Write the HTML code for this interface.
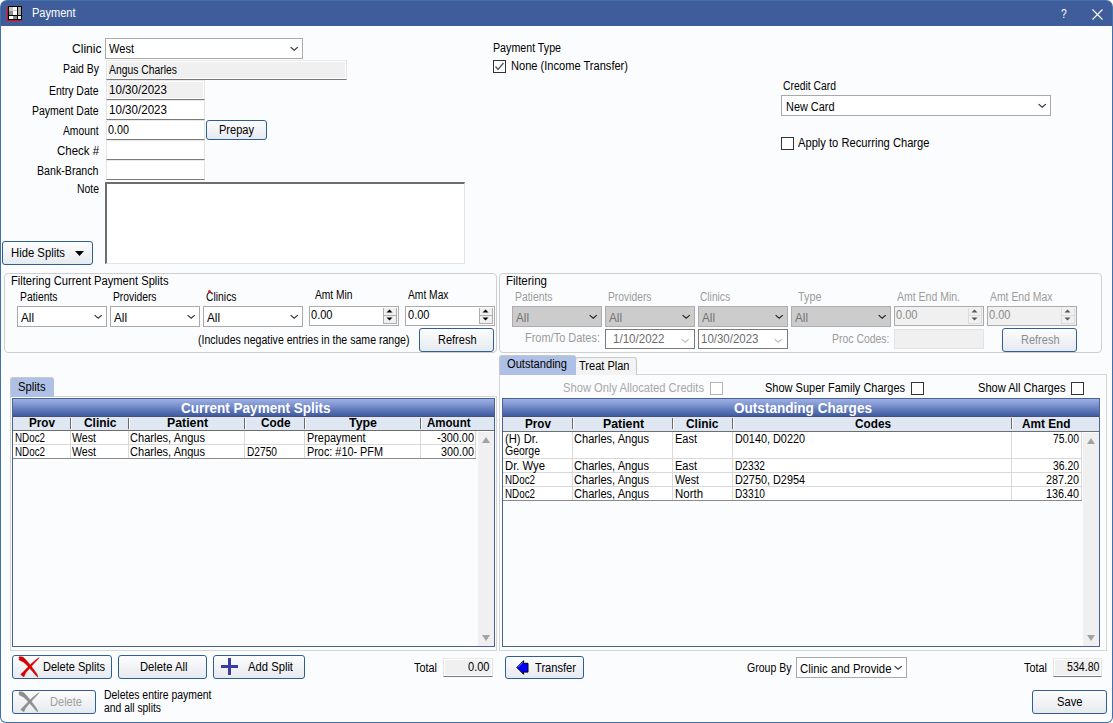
<!DOCTYPE html>
<html><head><meta charset="utf-8"><style>
html,body{margin:0;padding:0;background:#FFFFFF;}
body{width:1113px;height:723px;overflow:hidden;position:relative;font-family:"Liberation Sans",sans-serif;}
.b{position:absolute;}
.t{position:absolute;white-space:nowrap;}
</style></head><body>
<div class="b" style="left:0;top:0;width:1113px;height:723px;background:#4270AA;border-radius:7px 7px 6px 6px;"></div>
<div class="b" style="left:1px;top:1px;width:1111px;height:25px;background:#405D9B;border-radius:6px 6px 0 0;"></div>
<div class="b" style="left:1px;top:26px;width:1111px;height:696px;background:#FBFCFE;border-radius:0 0 5px 5px;"></div>
<svg class="b" style="left:7px;top:6px" width="15" height="15" viewBox="0 0 15 15" shape-rendering="crispEdges">
<rect x="0" y="1" width="1" height="14" fill="#FF0000"/><rect x="0" y="14" width="14" height="1" fill="#FF0000"/>
<rect x="1" y="0" width="14" height="14" fill="#000"/>
<rect x="2" y="1" width="4" height="4" fill="#C4C4C4"/><rect x="2" y="5" width="4" height="4" fill="#8E8E8E"/>
<rect x="6" y="1" width="4" height="8" fill="#FFFFFF"/><rect x="6" y="4" width="4" height="1" fill="#C8C8C8"/>
<rect x="11" y="1" width="3" height="8" fill="#ABABAB"/>
<rect x="2" y="10" width="4" height="3" fill="#FFFFFF"/><rect x="6" y="10" width="4" height="3" fill="#8A8A8A"/><rect x="11" y="10" width="3" height="3" fill="#FFFFFF"/>
</svg>
<div class="t" style="left:32.30px;top:6.34px;font-size:12px;line-height:14px;color:#FFFFFF;transform:scaleX(0.9186);transform-origin:0 0;">Payment</div>
<div class="t" style="left:1061.13px;top:7.34px;font-size:12px;line-height:14px;color:#FFFFFF;transform:scaleX(0.8600);transform-origin:0 0;">?</div>
<svg class="b" style="left:1092px;top:9px" width="11" height="11" viewBox="0 0 11 11"><path d="M0.5 0.5 L10.5 10.5 M10.5 0.5 L0.5 10.5" stroke="#fff" stroke-width="1.1"/></svg>
<div class="t" style="left:71.50px;top:42.17px;font-size:12.5px;line-height:14px;color:#000;transform:scaleX(0.9653);transform-origin:0 0;">Clinic</div>
<div class="t" style="left:62.60px;top:62.17px;font-size:12.5px;line-height:14px;color:#000;transform:scaleX(0.8357);transform-origin:0 0;">Paid By</div>
<div class="t" style="left:49.00px;top:84.17px;font-size:12.5px;line-height:14px;color:#000;transform:scaleX(0.8382);transform-origin:0 0;">Entry Date</div>
<div class="t" style="left:32.00px;top:104.17px;font-size:12.5px;line-height:14px;color:#000;transform:scaleX(0.8396);transform-origin:0 0;">Payment Date</div>
<div class="t" style="left:63.00px;top:124.17px;font-size:12.5px;line-height:14px;color:#000;transform:scaleX(0.8240);transform-origin:0 0;">Amount</div>
<div class="t" style="left:57.00px;top:144.17px;font-size:12.5px;line-height:14px;color:#000;transform:scaleX(0.9159);transform-origin:0 0;">Check #</div>
<div class="t" style="left:37.00px;top:164.17px;font-size:12.5px;line-height:14px;color:#000;transform:scaleX(0.8511);transform-origin:0 0;">Bank-Branch</div>
<div class="t" style="left:76.50px;top:182.17px;font-size:12.5px;line-height:14px;color:#000;transform:scaleX(0.8332);transform-origin:0 0;">Note</div>
<div class="b" style="left:105px;top:38px;width:198px;height:21px;background:#FFFFFF;border:1px solid #A9A9A9;box-sizing:border-box;"><svg width="9" height="6" viewBox="0 0 9 6" style="position:absolute;left:184px;top:7px;"><path d="M0.6 1.1 L4.2 4.3 L7.8 1.1" fill="none" stroke="#333" stroke-width="1.2"/></svg></div>
<div class="t" style="left:105.00px;top:43.17px;font-size:12.5px;line-height:14px;color:#000;transform:scaleX(0.8600);transform-origin:0 0;"></div>
<div class="t" style="left:108.80px;top:42.17px;font-size:12.5px;line-height:14px;color:#000;transform:scaleX(0.8850);transform-origin:0 0;">West</div>
<div class="b" style="left:106px;top:60px;width:241px;height:20px;background:#F0F0F0;border-left:1px solid #E3E3E3;border-right:1px solid #E3E3E3;border-top:1px solid #E8E8E8;border-bottom:1px solid #7A7A7A;box-sizing:border-box;box-shadow:inset 0 0 0 1px #FFFFFF;"></div>
<div class="t" style="left:108.50px;top:63.17px;font-size:12.5px;line-height:14px;color:#000;transform:scaleX(0.8294);transform-origin:0 0;">Angus Charles</div>
<div class="b" style="left:106px;top:80px;width:99px;height:20px;background:#F0F0F0;border-left:1px solid #E3E3E3;border-right:1px solid #E3E3E3;border-top:1px solid #E8E8E8;border-bottom:1px solid #7A7A7A;box-sizing:border-box;box-shadow:inset 0 0 0 1px #FFFFFF;"></div>
<div class="t" style="left:108.50px;top:83.17px;font-size:12.5px;line-height:14px;color:#000;transform:scaleX(0.9271);transform-origin:0 0;">10/30/2023</div>
<div class="b" style="left:106px;top:100px;width:99px;height:20px;background:#FFFFFF;border-left:1px solid #E3E3E3;border-right:1px solid #E3E3E3;border-top:1px solid #E8E8E8;border-bottom:1px solid #7A7A7A;box-sizing:border-box;box-shadow:inset 0 0 0 1px #FFFFFF;"></div>
<div class="t" style="left:108.50px;top:103.17px;font-size:12.5px;line-height:14px;color:#000;transform:scaleX(0.9271);transform-origin:0 0;">10/30/2023</div>
<div class="b" style="left:106px;top:120px;width:99px;height:20px;background:#FFFFFF;border-left:1px solid #E3E3E3;border-right:1px solid #E3E3E3;border-top:1px solid #E8E8E8;border-bottom:1px solid #7A7A7A;box-sizing:border-box;box-shadow:inset 0 0 0 1px #FFFFFF;"></div>
<div class="t" style="left:108.30px;top:123.17px;font-size:12.5px;line-height:14px;color:#000;transform:scaleX(0.8632);transform-origin:0 0;">0.00</div>
<div class="b" style="left:106px;top:140px;width:99px;height:20px;background:#FFFFFF;border-left:1px solid #E3E3E3;border-right:1px solid #E3E3E3;border-top:1px solid #E8E8E8;border-bottom:1px solid #7A7A7A;box-sizing:border-box;box-shadow:inset 0 0 0 1px #FFFFFF;"></div>
<div class="b" style="left:106px;top:160px;width:99px;height:20px;background:#FFFFFF;border-left:1px solid #E3E3E3;border-right:1px solid #E3E3E3;border-top:1px solid #E8E8E8;border-bottom:1px solid #7A7A7A;box-sizing:border-box;box-shadow:inset 0 0 0 1px #FFFFFF;"></div>
<div class="b" style="left:206px;top:120px;width:61px;height:20px;border:1px solid #2F5F92;border-radius:3px;box-sizing:border-box;background:linear-gradient(#FDFDFE,#F1F3F6 50%,#E6EAEF);"></div>
<div class="t" style="left:219.30px;top:123.17px;font-size:12.5px;line-height:14px;color:#000;transform:scaleX(0.8837);transform-origin:0 0;">Prepay</div>
<div class="b" style="left:105px;top:182px;width:360px;height:82px;background:#fff;border-top:2px solid #6E6E6E;border-left:2px solid #6E6E6E;border-right:1px solid #E3E3E3;border-bottom:1px solid #E3E3E3;box-sizing:border-box;"></div>
<div class="b" style="left:2px;top:241px;width:91px;height:24px;border:1px solid #2F5F92;border-radius:3px;box-sizing:border-box;background:linear-gradient(#FDFDFE,#F1F3F6 50%,#E6EAEF);"></div>
<div class="t" style="left:11.10px;top:246.17px;font-size:12.5px;line-height:14px;color:#000;transform:scaleX(0.9038);transform-origin:0 0;">Hide Splits</div>
<svg class="b" style="left:75px;top:251px" width="9" height="5" viewBox="0 0 9 5"><path d="M0 0 L9 0 L4.5 5Z" fill="#000"/></svg>
<div class="t" style="left:493.20px;top:41.17px;font-size:12.5px;line-height:14px;color:#000;transform:scaleX(0.8534);transform-origin:0 0;">Payment Type</div>
<div class="b" style="left:493px;top:60px;width:13px;height:13px;border:1px solid #333;box-sizing:border-box;background:#fff;"><svg width="13" height="13" viewBox="0 0 13 13" style="position:absolute;left:-1px;top:-1px"><path d="M2.5 6.5 L5 9.5 L10.5 3" fill="none" stroke="#555" stroke-width="1.3"/></svg></div>
<div class="t" style="left:511.00px;top:59.17px;font-size:12.5px;line-height:14px;color:#000;transform:scaleX(0.8864);transform-origin:0 0;">None (Income Transfer)</div>
<div class="t" style="left:783.40px;top:79.17px;font-size:12.5px;line-height:14px;color:#000;transform:scaleX(0.8293);transform-origin:0 0;">Credit Card</div>
<div class="b" style="left:781px;top:95px;width:270px;height:21px;background:#FFFFFF;border:1px solid #A9A9A9;box-sizing:border-box;"><svg width="9" height="6" viewBox="0 0 9 6" style="position:absolute;left:256px;top:7px;"><path d="M0.6 1.1 L4.2 4.3 L7.8 1.1" fill="none" stroke="#333" stroke-width="1.2"/></svg></div>
<div class="t" style="left:781.00px;top:100.17px;font-size:12.5px;line-height:14px;color:#000;transform:scaleX(0.8600);transform-origin:0 0;"></div>
<div class="t" style="left:785.70px;top:100.17px;font-size:12.5px;line-height:14px;color:#000;transform:scaleX(0.8727);transform-origin:0 0;">New Card</div>
<div class="b" style="left:781px;top:137px;width:13px;height:13px;border:1px solid #333;box-sizing:border-box;background:#fff;"></div>
<div class="t" style="left:798.30px;top:136.17px;font-size:12.5px;line-height:14px;color:#000;transform:scaleX(0.8927);transform-origin:0 0;">Apply to Recurring Charge</div>
<div class="b" style="left:4px;top:273px;width:493px;height:80px;border:1px solid #CFCFCF;border-radius:4px;box-sizing:border-box;"></div>
<div class="t" style="left:11.30px;top:274.17px;font-size:12.5px;line-height:14px;color:#000;transform:scaleX(0.8926);transform-origin:0 0;">Filtering Current Payment Splits</div>
<div class="t" style="left:20.20px;top:290.17px;font-size:12.5px;line-height:14px;color:#000;transform:scaleX(0.8303);transform-origin:0 0;">Patients</div>
<div class="t" style="left:113.40px;top:290.17px;font-size:12.5px;line-height:14px;color:#000;transform:scaleX(0.8239);transform-origin:0 0;">Providers</div>
<div class="t" style="left:205.50px;top:290.17px;font-size:12.5px;line-height:14px;color:#000;transform:scaleX(0.8285);transform-origin:0 0;">Clinics</div>
<div class="b" style="left:208px;top:290px;width:3px;height:3px;background:#E02020;border-radius:1.5px"></div>
<div class="b" style="left:17px;top:306px;width:90px;height:21px;background:#FFFFFF;border:1px solid #A9A9A9;box-sizing:border-box;"><svg width="9" height="6" viewBox="0 0 9 6" style="position:absolute;left:76px;top:7px;"><path d="M0.6 1.1 L4.2 4.3 L7.8 1.1" fill="none" stroke="#333" stroke-width="1.2"/></svg></div>
<div class="t" style="left:17.00px;top:311.17px;font-size:12.5px;line-height:14px;color:#000;transform:scaleX(0.8600);transform-origin:0 0;"></div>
<div class="t" style="left:21.00px;top:311.17px;font-size:12.5px;line-height:14px;color:#000;transform:scaleX(0.9358);transform-origin:0 0;">All</div>
<div class="b" style="left:110px;top:306px;width:90px;height:21px;background:#FFFFFF;border:1px solid #A9A9A9;box-sizing:border-box;"><svg width="9" height="6" viewBox="0 0 9 6" style="position:absolute;left:76px;top:7px;"><path d="M0.6 1.1 L4.2 4.3 L7.8 1.1" fill="none" stroke="#333" stroke-width="1.2"/></svg></div>
<div class="t" style="left:110.00px;top:311.17px;font-size:12.5px;line-height:14px;color:#000;transform:scaleX(0.8600);transform-origin:0 0;"></div>
<div class="t" style="left:114.00px;top:311.17px;font-size:12.5px;line-height:14px;color:#000;transform:scaleX(0.9358);transform-origin:0 0;">All</div>
<div class="b" style="left:203px;top:306px;width:100px;height:21px;background:#FFFFFF;border:1px solid #A9A9A9;box-sizing:border-box;"><svg width="9" height="6" viewBox="0 0 9 6" style="position:absolute;left:86px;top:7px;"><path d="M0.6 1.1 L4.2 4.3 L7.8 1.1" fill="none" stroke="#333" stroke-width="1.2"/></svg></div>
<div class="t" style="left:203.00px;top:311.17px;font-size:12.5px;line-height:14px;color:#000;transform:scaleX(0.8600);transform-origin:0 0;"></div>
<div class="t" style="left:207.00px;top:311.17px;font-size:12.5px;line-height:14px;color:#000;transform:scaleX(0.9358);transform-origin:0 0;">All</div>
<div class="t" style="left:315.30px;top:288.17px;font-size:12.5px;line-height:14px;color:#000;transform:scaleX(0.8181);transform-origin:0 0;">Amt Min</div>
<div class="t" style="left:408.40px;top:288.17px;font-size:12.5px;line-height:14px;color:#000;transform:scaleX(0.8213);transform-origin:0 0;">Amt Max</div>
<div class="b" style="left:309px;top:306px;width:90px;height:20px;background:#FFFFFF;border:1px solid #ABABAB;box-sizing:border-box;"><div style="position:absolute;left:73px;top:1px;width:14px;height:16px;background:#F0F0F0;border-left:1px solid #ADADAD;border-right:1px solid #ADADAD;border-bottom:1px solid #ADADAD;box-sizing:border-box;"><div style="position:absolute;left:0;top:7px;width:12px;height:1px;background:#ADADAD"></div><svg width="12" height="15" viewBox="0 0 12 15" style="position:absolute;left:0;top:0"><path d="M2.5 4.5 L5.5 1.5 L8.5 4.5Z" fill="#000000"/><path d="M2.5 9.5 L5.5 12.5 L8.5 9.5Z" fill="#000000"/></svg></div></div>
<div class="t" style="left:311.10px;top:308.17px;font-size:12.5px;line-height:14px;color:#000;transform:scaleX(0.8837);transform-origin:0 0;">0.00</div>
<div class="b" style="left:405px;top:306px;width:90px;height:20px;background:#FFFFFF;border:1px solid #ABABAB;box-sizing:border-box;"><div style="position:absolute;left:73px;top:1px;width:14px;height:16px;background:#F0F0F0;border-left:1px solid #ADADAD;border-right:1px solid #ADADAD;border-bottom:1px solid #ADADAD;box-sizing:border-box;"><div style="position:absolute;left:0;top:7px;width:12px;height:1px;background:#ADADAD"></div><svg width="12" height="15" viewBox="0 0 12 15" style="position:absolute;left:0;top:0"><path d="M2.5 4.5 L5.5 1.5 L8.5 4.5Z" fill="#000000"/><path d="M2.5 9.5 L5.5 12.5 L8.5 9.5Z" fill="#000000"/></svg></div></div>
<div class="t" style="left:407.50px;top:308.17px;font-size:12.5px;line-height:14px;color:#000;transform:scaleX(0.8837);transform-origin:0 0;">0.00</div>
<div class="t" style="left:198.10px;top:333.17px;font-size:12.5px;line-height:14px;color:#000;transform:scaleX(0.8455);transform-origin:0 0;">(Includes negative entries in the same range)</div>
<div class="b" style="left:419px;top:328px;width:75px;height:24px;border:1px solid #2F5F92;border-radius:3px;box-sizing:border-box;background:linear-gradient(#FDFDFE,#F1F3F6 50%,#E6EAEF);"></div>
<div class="t" style="left:437.50px;top:333.17px;font-size:12.5px;line-height:14px;color:#000;transform:scaleX(0.8796);transform-origin:0 0;">Refresh</div>
<div class="b" style="left:499px;top:273px;width:603px;height:80px;border:1px solid #CFCFCF;border-radius:4px;box-sizing:border-box;"></div>
<div class="t" style="left:506.40px;top:274.17px;font-size:12.5px;line-height:14px;color:#000;transform:scaleX(0.9222);transform-origin:0 0;">Filtering</div>
<div class="t" style="left:515.30px;top:290.17px;font-size:12.5px;line-height:14px;color:#9B9B9B;transform:scaleX(0.8303);transform-origin:0 0;">Patients</div>
<div class="t" style="left:608.30px;top:290.17px;font-size:12.5px;line-height:14px;color:#9B9B9B;transform:scaleX(0.8239);transform-origin:0 0;">Providers</div>
<div class="t" style="left:699.80px;top:290.17px;font-size:12.5px;line-height:14px;color:#9B9B9B;transform:scaleX(0.8150);transform-origin:0 0;">Clinics</div>
<div class="t" style="left:797.50px;top:290.17px;font-size:12.5px;line-height:14px;color:#9B9B9B;transform:scaleX(0.8671);transform-origin:0 0;">Type</div>
<div class="b" style="left:512px;top:306px;width:90px;height:21px;background:#CCCCCC;border:1px solid #ADADAD;box-sizing:border-box;"><svg width="9" height="6" viewBox="0 0 9 6" style="position:absolute;left:76px;top:7px;"><path d="M0.6 1.1 L4.2 4.3 L7.8 1.1" fill="none" stroke="#222" stroke-width="1.2"/></svg></div>
<div class="t" style="left:512.00px;top:311.17px;font-size:12.5px;line-height:14px;color:#8A8A8A;transform:scaleX(0.8600);transform-origin:0 0;"></div>
<div class="t" style="left:516.00px;top:311.17px;font-size:12.5px;line-height:14px;color:#737373;transform:scaleX(0.9358);transform-origin:0 0;">All</div>
<div class="b" style="left:605px;top:306px;width:90px;height:21px;background:#CCCCCC;border:1px solid #ADADAD;box-sizing:border-box;"><svg width="9" height="6" viewBox="0 0 9 6" style="position:absolute;left:76px;top:7px;"><path d="M0.6 1.1 L4.2 4.3 L7.8 1.1" fill="none" stroke="#222" stroke-width="1.2"/></svg></div>
<div class="t" style="left:605.00px;top:311.17px;font-size:12.5px;line-height:14px;color:#8A8A8A;transform:scaleX(0.8600);transform-origin:0 0;"></div>
<div class="t" style="left:609.00px;top:311.17px;font-size:12.5px;line-height:14px;color:#737373;transform:scaleX(0.9358);transform-origin:0 0;">All</div>
<div class="b" style="left:698px;top:306px;width:90px;height:21px;background:#CCCCCC;border:1px solid #ADADAD;box-sizing:border-box;"><svg width="9" height="6" viewBox="0 0 9 6" style="position:absolute;left:76px;top:7px;"><path d="M0.6 1.1 L4.2 4.3 L7.8 1.1" fill="none" stroke="#222" stroke-width="1.2"/></svg></div>
<div class="t" style="left:698.00px;top:311.17px;font-size:12.5px;line-height:14px;color:#8A8A8A;transform:scaleX(0.8600);transform-origin:0 0;"></div>
<div class="t" style="left:702.00px;top:311.17px;font-size:12.5px;line-height:14px;color:#737373;transform:scaleX(0.9358);transform-origin:0 0;">All</div>
<div class="b" style="left:791px;top:306px;width:100px;height:21px;background:#CCCCCC;border:1px solid #ADADAD;box-sizing:border-box;"><svg width="9" height="6" viewBox="0 0 9 6" style="position:absolute;left:86px;top:7px;"><path d="M0.6 1.1 L4.2 4.3 L7.8 1.1" fill="none" stroke="#222" stroke-width="1.2"/></svg></div>
<div class="t" style="left:791.00px;top:311.17px;font-size:12.5px;line-height:14px;color:#8A8A8A;transform:scaleX(0.8600);transform-origin:0 0;"></div>
<div class="t" style="left:795.00px;top:311.17px;font-size:12.5px;line-height:14px;color:#737373;transform:scaleX(0.9358);transform-origin:0 0;">All</div>
<div class="t" style="left:897.20px;top:290.17px;font-size:12.5px;line-height:14px;color:#9B9B9B;transform:scaleX(0.8397);transform-origin:0 0;">Amt End Min.</div>
<div class="t" style="left:990.30px;top:290.17px;font-size:12.5px;line-height:14px;color:#9B9B9B;transform:scaleX(0.8330);transform-origin:0 0;">Amt End Max</div>
<div class="b" style="left:894px;top:306px;width:90px;height:20px;background:#F0F0F0;border:1px solid #ABABAB;box-sizing:border-box;"><div style="position:absolute;left:73px;top:1px;width:14px;height:16px;background:#F0F0F0;border-left:1px solid #DCDCDC;border-right:1px solid #DCDCDC;border-bottom:1px solid #DCDCDC;box-sizing:border-box;"><div style="position:absolute;left:0;top:7px;width:12px;height:1px;background:#DCDCDC"></div><svg width="12" height="15" viewBox="0 0 12 15" style="position:absolute;left:0;top:0"><path d="M2.5 4.5 L5.5 1.5 L8.5 4.5Z" fill="#555555"/><path d="M2.5 9.5 L5.5 12.5 L8.5 9.5Z" fill="#555555"/></svg></div></div>
<div class="t" style="left:896.30px;top:308.17px;font-size:12.5px;line-height:14px;color:#8A8A8A;transform:scaleX(0.8837);transform-origin:0 0;">0.00</div>
<div class="b" style="left:987px;top:306px;width:90px;height:20px;background:#F0F0F0;border:1px solid #ABABAB;box-sizing:border-box;"><div style="position:absolute;left:73px;top:1px;width:14px;height:16px;background:#F0F0F0;border-left:1px solid #DCDCDC;border-right:1px solid #DCDCDC;border-bottom:1px solid #DCDCDC;box-sizing:border-box;"><div style="position:absolute;left:0;top:7px;width:12px;height:1px;background:#DCDCDC"></div><svg width="12" height="15" viewBox="0 0 12 15" style="position:absolute;left:0;top:0"><path d="M2.5 4.5 L5.5 1.5 L8.5 4.5Z" fill="#555555"/><path d="M2.5 9.5 L5.5 12.5 L8.5 9.5Z" fill="#555555"/></svg></div></div>
<div class="t" style="left:988.90px;top:308.17px;font-size:12.5px;line-height:14px;color:#8A8A8A;transform:scaleX(0.8837);transform-origin:0 0;">0.00</div>
<div class="t" style="left:525.40px;top:331.17px;font-size:12.5px;line-height:14px;color:#9B9B9B;transform:scaleX(0.8778);transform-origin:0 0;">From/To Dates:</div>
<div class="b" style="left:605px;top:329px;width:90px;height:20px;background:#fff;border:1px solid #7A7A7A;box-sizing:border-box;"><svg width="9" height="6" viewBox="0 0 9 6" style="position:absolute;left:75px;top:8px;"><path d="M0.6 1.1 L4.2 4.3 L7.8 1.1" fill="none" stroke="#BBBBBB" stroke-width="1.2"/></svg></div>
<div class="t" style="left:613.40px;top:332.17px;font-size:12.5px;line-height:14px;color:#6D6D6D;transform:scaleX(0.9261);transform-origin:0 0;">1/10/2022</div>
<div class="b" style="left:698px;top:329px;width:90px;height:20px;background:#fff;border:1px solid #7A7A7A;box-sizing:border-box;"><svg width="9" height="6" viewBox="0 0 9 6" style="position:absolute;left:75px;top:8px;"><path d="M0.6 1.1 L4.2 4.3 L7.8 1.1" fill="none" stroke="#BBBBBB" stroke-width="1.2"/></svg></div>
<div class="t" style="left:700.80px;top:332.17px;font-size:12.5px;line-height:14px;color:#6D6D6D;transform:scaleX(0.9191);transform-origin:0 0;">10/30/2023</div>
<div class="t" style="left:831.50px;top:332.17px;font-size:12.5px;line-height:14px;color:#9B9B9B;transform:scaleX(0.8360);transform-origin:0 0;">Proc Codes:</div>
<div class="b" style="left:894px;top:329px;width:90px;height:20px;background:#F0F0F0;border:1px solid #E3E3E3;box-sizing:border-box;"></div>
<div class="b" style="left:1002px;top:328px;width:75px;height:24px;border:1px solid #2F5F92;border-radius:3px;box-sizing:border-box;background:linear-gradient(#FDFDFE,#F1F3F6 50%,#E6EAEF);"></div>
<div class="t" style="left:1020.70px;top:333.17px;font-size:12.5px;line-height:14px;color:#8D8D8D;transform:scaleX(0.8796);transform-origin:0 0;">Refresh</div>
<div class="b" style="left:10px;top:396px;width:487px;height:255px;border:1px solid #D5D5D5;box-sizing:border-box;"></div>
<div class="b" style="left:10px;top:377px;width:44px;height:20px;background:#AFC0E6;border:1px solid #C9C9C9;border-right:none;border-bottom:none;border-radius:3px 3px 0 0;box-sizing:border-box;"></div>
<div class="t" style="left:18.20px;top:380.17px;font-size:12.5px;line-height:14px;color:#000;transform:scaleX(0.8997);transform-origin:0 0;">Splits</div>
<div class="b" style="left:12px;top:398px;width:483px;height:249px;border:1px solid #4A6394;box-sizing:border-box;background:#FBFCFE;"></div>
<div class="b" style="left:13px;top:399px;width:481px;height:18px;background:linear-gradient(#9DB0E4,#7E95D0 35%,#5A73B6 70%,#3F5C9E);border-bottom:1px solid #4B4F77;box-sizing:border-box;"></div>
<div class="t" style="left:180.70px;top:401.48px;font-size:14.5px;line-height:14px;color:#FFFFFF;font-weight:bold;transform:scaleX(0.9324);transform-origin:0 0;">Current Payment Splits</div>
<div class="b" style="left:13px;top:417px;width:481px;height:14px;background:#DEE7F2;border-bottom:1px solid #6E6E6E;box-sizing:border-box;"></div>
<div class="b" style="left:70px;top:418px;width:1px;height:11px;background:#6A6A6A;box-shadow:1px 0 0 #FFFFFF"></div>
<div class="b" style="left:128px;top:418px;width:1px;height:11px;background:#6A6A6A;box-shadow:1px 0 0 #FFFFFF"></div>
<div class="b" style="left:244px;top:418px;width:1px;height:11px;background:#6A6A6A;box-shadow:1px 0 0 #FFFFFF"></div>
<div class="b" style="left:304px;top:418px;width:1px;height:11px;background:#6A6A6A;box-shadow:1px 0 0 #FFFFFF"></div>
<div class="b" style="left:420px;top:418px;width:1px;height:11px;background:#6A6A6A;box-shadow:1px 0 0 #FFFFFF"></div>
<div class="t" style="left:28.80px;top:416.34px;font-size:12px;line-height:14px;color:#000;font-weight:bold;transform:scaleX(0.9746);transform-origin:0 0;">Prov</div>
<div class="t" style="left:83.50px;top:416.34px;font-size:12px;line-height:14px;color:#000;font-weight:bold;transform:scaleX(0.9947);transform-origin:0 0;">Clinic</div>
<div class="t" style="left:166.70px;top:416.34px;font-size:12px;line-height:14px;color:#000;font-weight:bold;transform:scaleX(1.0248);transform-origin:0 0;">Patient</div>
<div class="t" style="left:260.70px;top:416.34px;font-size:12px;line-height:14px;color:#000;font-weight:bold;transform:scaleX(0.9833);transform-origin:0 0;">Code</div>
<div class="t" style="left:349.40px;top:416.34px;font-size:12px;line-height:14px;color:#000;font-weight:bold;transform:scaleX(1.0325);transform-origin:0 0;">Type</div>
<div class="t" style="left:427.00px;top:416.34px;font-size:12px;line-height:14px;color:#000;font-weight:bold;transform:scaleX(0.9598);transform-origin:0 0;">Amount</div>
<div class="b" style="left:13px;top:431px;width:463px;height:14px;background:#FFFFFF;border-bottom:1px solid #D9D9D9;box-sizing:border-box;"></div>
<div class="b" style="left:70px;top:431px;width:1px;height:14px;background:#D9D9D9"></div>
<div class="b" style="left:128px;top:431px;width:1px;height:14px;background:#D9D9D9"></div>
<div class="b" style="left:244px;top:431px;width:1px;height:14px;background:#D9D9D9"></div>
<div class="b" style="left:304px;top:431px;width:1px;height:14px;background:#D9D9D9"></div>
<div class="b" style="left:420px;top:431px;width:1px;height:14px;background:#D9D9D9"></div>
<div class="b" style="left:475px;top:431px;width:1px;height:14px;background:#D9D9D9"></div>
<div class="t" style="left:14.70px;top:431.17px;font-size:12.5px;line-height:14px;color:#000;transform:scaleX(0.7852);transform-origin:0 0;">NDoc2</div>
<div class="t" style="left:72.00px;top:431.17px;font-size:12.5px;line-height:14px;color:#000;transform:scaleX(0.8496);transform-origin:0 0;">West</div>
<div class="t" style="left:130.30px;top:431.17px;font-size:12.5px;line-height:14px;color:#000;transform:scaleX(0.8847);transform-origin:0 0;">Charles, Angus</div>
<div class="t" style="left:306.50px;top:431.17px;font-size:12.5px;line-height:14px;color:#000;transform:scaleX(0.8680);transform-origin:0 0;">Prepayment</div>
<div class="t" style="left:436.80px;top:431.17px;font-size:12.5px;line-height:14px;color:#000;transform:scaleX(0.8727);transform-origin:0 0;">-300.00</div>
<div class="b" style="left:13px;top:445px;width:463px;height:14px;background:#FFFFFF;border-bottom:1px solid #D9D9D9;box-sizing:border-box;"></div>
<div class="b" style="left:70px;top:445px;width:1px;height:14px;background:#D9D9D9"></div>
<div class="b" style="left:128px;top:445px;width:1px;height:14px;background:#D9D9D9"></div>
<div class="b" style="left:244px;top:445px;width:1px;height:14px;background:#D9D9D9"></div>
<div class="b" style="left:304px;top:445px;width:1px;height:14px;background:#D9D9D9"></div>
<div class="b" style="left:420px;top:445px;width:1px;height:14px;background:#D9D9D9"></div>
<div class="b" style="left:475px;top:445px;width:1px;height:14px;background:#D9D9D9"></div>
<div class="t" style="left:14.70px;top:445.17px;font-size:12.5px;line-height:14px;color:#000;transform:scaleX(0.7852);transform-origin:0 0;">NDoc2</div>
<div class="t" style="left:72.00px;top:445.17px;font-size:12.5px;line-height:14px;color:#000;transform:scaleX(0.8496);transform-origin:0 0;">West</div>
<div class="t" style="left:130.30px;top:445.17px;font-size:12.5px;line-height:14px;color:#000;transform:scaleX(0.8847);transform-origin:0 0;">Charles, Angus</div>
<div class="t" style="left:246.70px;top:445.17px;font-size:12.5px;line-height:14px;color:#000;transform:scaleX(0.8144);transform-origin:0 0;">D2750</div>
<div class="t" style="left:306.50px;top:445.17px;font-size:12.5px;line-height:14px;color:#000;transform:scaleX(0.8683);transform-origin:0 0;">Proc: #10- PFM</div>
<div class="t" style="left:440.80px;top:445.17px;font-size:12.5px;line-height:14px;color:#000;transform:scaleX(0.8631);transform-origin:0 0;">300.00</div>
<div class="b" style="left:13px;top:458px;width:463px;height:1px;background:#8A8A8A"></div>
<div class="b" style="left:478px;top:432px;width:16px;height:214px;background:#F0F0F0;"></div>
<svg class="b" style="left:482px;top:437px" width="8" height="6" viewBox="0 0 8 6"><path d="M0 6 L4 0 L8 6Z" fill="#A3A3A3"/></svg>
<svg class="b" style="left:482px;top:635px" width="8" height="6" viewBox="0 0 8 6"><path d="M0 0 L4 6 L8 0Z" fill="#A3A3A3"/></svg>
<div class="b" style="left:499px;top:374px;width:608px;height:277px;border:1px solid #D5D5D5;box-sizing:border-box;"></div>
<div class="b" style="left:575px;top:357px;width:62px;height:18px;background:#F3F3F3;border:1px solid #C9C9C9;border-bottom:none;border-radius:3px 3px 0 0;box-sizing:border-box;"></div>
<div class="b" style="left:499px;top:355px;width:77px;height:20px;background:#AFC0E6;border:1px solid #C9C9C9;border-right:none;border-bottom:none;border-radius:3px 3px 0 0;box-sizing:border-box;"></div>
<div class="t" style="left:507.00px;top:357.17px;font-size:12.5px;line-height:14px;color:#000;transform:scaleX(0.8901);transform-origin:0 0;">Outstanding</div>
<div class="t" style="left:579.40px;top:359.17px;font-size:12.5px;line-height:14px;color:#000;transform:scaleX(0.8828);transform-origin:0 0;">Treat Plan</div>
<div class="t" style="left:563.40px;top:381.17px;font-size:12.5px;line-height:14px;color:#A8A8A8;transform:scaleX(0.8940);transform-origin:0 0;">Show Only Allocated Credits</div>
<div class="b" style="left:710px;top:382px;width:13px;height:13px;border:1px solid #B5B5B5;box-sizing:border-box;background:#fff;"></div>
<div class="t" style="left:765.30px;top:381.17px;font-size:12.5px;line-height:14px;color:#000;transform:scaleX(0.8800);transform-origin:0 0;">Show Super Family Charges</div>
<div class="b" style="left:911px;top:382px;width:13px;height:13px;border:1px solid #333;box-sizing:border-box;background:#fff;"></div>
<div class="t" style="left:978.30px;top:381.17px;font-size:12.5px;line-height:14px;color:#000;transform:scaleX(0.8868);transform-origin:0 0;">Show All Charges</div>
<div class="b" style="left:1071px;top:382px;width:13px;height:13px;border:1px solid #333;box-sizing:border-box;background:#fff;"></div>
<div class="b" style="left:502px;top:398px;width:598px;height:249px;border:1px solid #4A6394;box-sizing:border-box;background:#FBFCFE;"></div>
<div class="b" style="left:503px;top:399px;width:596px;height:18px;background:linear-gradient(#9DB0E4,#7E95D0 35%,#5A73B6 70%,#3F5C9E);border-bottom:1px solid #4B4F77;box-sizing:border-box;"></div>
<div class="t" style="left:734.20px;top:401.48px;font-size:14.5px;line-height:14px;color:#FFFFFF;font-weight:bold;transform:scaleX(0.9360);transform-origin:0 0;">Outstanding Charges</div>
<div class="b" style="left:503px;top:417px;width:596px;height:15px;background:#DEE7F2;border-bottom:1px solid #6E6E6E;box-sizing:border-box;"></div>
<div class="b" style="left:572px;top:418px;width:1px;height:11px;background:#6A6A6A;box-shadow:1px 0 0 #FFFFFF"></div>
<div class="b" style="left:672px;top:418px;width:1px;height:11px;background:#6A6A6A;box-shadow:1px 0 0 #FFFFFF"></div>
<div class="b" style="left:732px;top:418px;width:1px;height:11px;background:#6A6A6A;box-shadow:1px 0 0 #FFFFFF"></div>
<div class="b" style="left:1011px;top:418px;width:1px;height:11px;background:#6A6A6A;box-shadow:1px 0 0 #FFFFFF"></div>
<div class="t" style="left:524.70px;top:417.34px;font-size:12px;line-height:14px;color:#000;font-weight:bold;transform:scaleX(0.9746);transform-origin:0 0;">Prov</div>
<div class="t" style="left:602.90px;top:417.34px;font-size:12px;line-height:14px;color:#000;font-weight:bold;transform:scaleX(1.0248);transform-origin:0 0;">Patient</div>
<div class="t" style="left:686.30px;top:417.34px;font-size:12px;line-height:14px;color:#000;font-weight:bold;transform:scaleX(0.9947);transform-origin:0 0;">Clinic</div>
<div class="t" style="left:854.60px;top:417.34px;font-size:12px;line-height:14px;color:#000;font-weight:bold;transform:scaleX(0.9816);transform-origin:0 0;">Codes</div>
<div class="t" style="left:1021.90px;top:417.34px;font-size:12px;line-height:14px;color:#000;font-weight:bold;transform:scaleX(0.9831);transform-origin:0 0;">Amt End</div>
<div class="b" style="left:503px;top:432px;width:579px;height:27px;background:#FFFFFF;border-bottom:1px solid #D9D9D9;box-sizing:border-box;"></div>
<div class="b" style="left:572px;top:432px;width:1px;height:27px;background:#D9D9D9"></div>
<div class="b" style="left:672px;top:432px;width:1px;height:27px;background:#D9D9D9"></div>
<div class="b" style="left:732px;top:432px;width:1px;height:27px;background:#D9D9D9"></div>
<div class="b" style="left:1011px;top:432px;width:1px;height:27px;background:#D9D9D9"></div>
<div class="b" style="left:1081px;top:432px;width:1px;height:27px;background:#D9D9D9"></div>
<div class="t" style="left:504.80px;top:432.17px;font-size:12.5px;line-height:14px;color:#000;transform:scaleX(0.8967);transform-origin:0 0;">(H) Dr.</div>
<div class="t" style="left:504.80px;top:444.17px;font-size:12.5px;line-height:14px;color:#000;transform:scaleX(0.8394);transform-origin:0 0;">George</div>
<div class="t" style="left:574.40px;top:432.17px;font-size:12.5px;line-height:14px;color:#000;transform:scaleX(0.8847);transform-origin:0 0;">Charles, Angus</div>
<div class="t" style="left:674.80px;top:432.17px;font-size:12.5px;line-height:14px;color:#000;transform:scaleX(0.8796);transform-origin:0 0;">East</div>
<div class="t" style="left:734.50px;top:432.17px;font-size:12.5px;line-height:14px;color:#000;transform:scaleX(0.8683);transform-origin:0 0;">D0140, D0220</div>
<div class="t" style="left:1053.00px;top:432.17px;font-size:12.5px;line-height:14px;color:#000;transform:scaleX(0.8312);transform-origin:0 0;">75.00</div>
<div class="b" style="left:503px;top:459px;width:579px;height:14px;background:#FFFFFF;border-bottom:1px solid #D9D9D9;box-sizing:border-box;"></div>
<div class="b" style="left:572px;top:459px;width:1px;height:14px;background:#D9D9D9"></div>
<div class="b" style="left:672px;top:459px;width:1px;height:14px;background:#D9D9D9"></div>
<div class="b" style="left:732px;top:459px;width:1px;height:14px;background:#D9D9D9"></div>
<div class="b" style="left:1011px;top:459px;width:1px;height:14px;background:#D9D9D9"></div>
<div class="b" style="left:1081px;top:459px;width:1px;height:14px;background:#D9D9D9"></div>
<div class="t" style="left:504.80px;top:459.17px;font-size:12.5px;line-height:14px;color:#000;transform:scaleX(0.9022);transform-origin:0 0;">Dr. Wye</div>
<div class="t" style="left:574.40px;top:459.17px;font-size:12.5px;line-height:14px;color:#000;transform:scaleX(0.8847);transform-origin:0 0;">Charles, Angus</div>
<div class="t" style="left:674.80px;top:459.17px;font-size:12.5px;line-height:14px;color:#000;transform:scaleX(0.8796);transform-origin:0 0;">East</div>
<div class="t" style="left:734.50px;top:459.17px;font-size:12.5px;line-height:14px;color:#000;transform:scaleX(0.8144);transform-origin:0 0;">D2332</div>
<div class="t" style="left:1053.00px;top:459.17px;font-size:12.5px;line-height:14px;color:#000;transform:scaleX(0.8312);transform-origin:0 0;">36.20</div>
<div class="b" style="left:503px;top:473px;width:579px;height:14px;background:#FFFFFF;border-bottom:1px solid #D9D9D9;box-sizing:border-box;"></div>
<div class="b" style="left:572px;top:473px;width:1px;height:14px;background:#D9D9D9"></div>
<div class="b" style="left:672px;top:473px;width:1px;height:14px;background:#D9D9D9"></div>
<div class="b" style="left:732px;top:473px;width:1px;height:14px;background:#D9D9D9"></div>
<div class="b" style="left:1011px;top:473px;width:1px;height:14px;background:#D9D9D9"></div>
<div class="b" style="left:1081px;top:473px;width:1px;height:14px;background:#D9D9D9"></div>
<div class="t" style="left:504.80px;top:473.17px;font-size:12.5px;line-height:14px;color:#000;transform:scaleX(0.7852);transform-origin:0 0;">NDoc2</div>
<div class="t" style="left:574.40px;top:473.17px;font-size:12.5px;line-height:14px;color:#000;transform:scaleX(0.8847);transform-origin:0 0;">Charles, Angus</div>
<div class="t" style="left:674.80px;top:473.17px;font-size:12.5px;line-height:14px;color:#000;transform:scaleX(0.8496);transform-origin:0 0;">West</div>
<div class="t" style="left:734.50px;top:473.17px;font-size:12.5px;line-height:14px;color:#000;transform:scaleX(0.8683);transform-origin:0 0;">D2750, D2954</div>
<div class="t" style="left:1046.00px;top:473.17px;font-size:12.5px;line-height:14px;color:#000;transform:scaleX(0.8631);transform-origin:0 0;">287.20</div>
<div class="b" style="left:503px;top:487px;width:579px;height:14px;background:#FFFFFF;border-bottom:1px solid #D9D9D9;box-sizing:border-box;"></div>
<div class="b" style="left:572px;top:487px;width:1px;height:14px;background:#D9D9D9"></div>
<div class="b" style="left:672px;top:487px;width:1px;height:14px;background:#D9D9D9"></div>
<div class="b" style="left:732px;top:487px;width:1px;height:14px;background:#D9D9D9"></div>
<div class="b" style="left:1011px;top:487px;width:1px;height:14px;background:#D9D9D9"></div>
<div class="b" style="left:1081px;top:487px;width:1px;height:14px;background:#D9D9D9"></div>
<div class="t" style="left:504.80px;top:487.17px;font-size:12.5px;line-height:14px;color:#000;transform:scaleX(0.7852);transform-origin:0 0;">NDoc2</div>
<div class="t" style="left:574.40px;top:487.17px;font-size:12.5px;line-height:14px;color:#000;transform:scaleX(0.8847);transform-origin:0 0;">Charles, Angus</div>
<div class="t" style="left:674.80px;top:487.17px;font-size:12.5px;line-height:14px;color:#000;transform:scaleX(0.9160);transform-origin:0 0;">North</div>
<div class="t" style="left:734.50px;top:487.17px;font-size:12.5px;line-height:14px;color:#000;transform:scaleX(0.8144);transform-origin:0 0;">D3310</div>
<div class="t" style="left:1046.00px;top:487.17px;font-size:12.5px;line-height:14px;color:#000;transform:scaleX(0.8631);transform-origin:0 0;">136.40</div>
<div class="b" style="left:503px;top:500px;width:579px;height:1px;background:#8A8A8A"></div>
<div class="b" style="left:1083px;top:433px;width:16px;height:213px;background:#F0F0F0;"></div>
<svg class="b" style="left:1087px;top:438px" width="8" height="6" viewBox="0 0 8 6"><path d="M0 6 L4 0 L8 6Z" fill="#A3A3A3"/></svg>
<svg class="b" style="left:1087px;top:635px" width="8" height="6" viewBox="0 0 8 6"><path d="M0 0 L4 6 L8 0Z" fill="#A3A3A3"/></svg>
<div class="b" style="left:12px;top:655px;width:100px;height:24px;border:1px solid #2F5F92;border-radius:3px;box-sizing:border-box;background:linear-gradient(#FDFDFE,#F1F3F6 50%,#E6EAEF);"></div>
<svg class="b" style="left:14px;top:653px" width="30" height="28" viewBox="0 0 30 28"><path d="M5 4 C6.5 3.5 8.3 3.7 9.8 4.8 C14 9 19 15.5 22.5 20.5 C23.3 21.8 23.8 23 23.8 24 C23 23.6 22.5 23 21.8 22.2 C17.5 17 13.5 12.5 9.5 9 C8 8.1 6.5 7.8 5.3 7 Z" fill="#D70000" stroke="#D70000" stroke-width="0.6"/><path d="M25.2 4.6 C23 7.5 19 11.5 13.2 18 C11.8 19.5 10.5 21.5 10 23.8 C8.9 23.2 7.6 22.4 6.8 21.6 C7.8 20.3 9 19.2 10.3 18 C15 13 20 8 25.2 4.6 Z" fill="#D70000" stroke="#D70000" stroke-width="0.6"/></svg>
<div class="t" style="left:42.80px;top:660.17px;font-size:12.5px;line-height:14px;color:#000;transform:scaleX(0.8835);transform-origin:0 0;">Delete Splits</div>
<div class="b" style="left:118px;top:655px;width:89px;height:24px;border:1px solid #2F5F92;border-radius:3px;box-sizing:border-box;background:linear-gradient(#FDFDFE,#F1F3F6 50%,#E6EAEF);"></div>
<div class="t" style="left:139.50px;top:660.17px;font-size:12.5px;line-height:14px;color:#000;transform:scaleX(0.8995);transform-origin:0 0;">Delete All</div>
<div class="b" style="left:213px;top:655px;width:92px;height:24px;border:1px solid #2F5F92;border-radius:3px;box-sizing:border-box;background:linear-gradient(#FDFDFE,#F1F3F6 50%,#E6EAEF);"></div>
<svg class="b" style="left:221px;top:658px" width="17" height="17" viewBox="0 0 17 17"><rect x="0" y="7" width="17" height="3" fill="#3B3BA3"/><rect x="7" y="0" width="3" height="17" fill="#3B3BA3"/></svg>
<div class="t" style="left:247.90px;top:660.17px;font-size:12.5px;line-height:14px;color:#000;transform:scaleX(0.8994);transform-origin:0 0;">Add Split</div>
<div class="b" style="left:12px;top:690px;width:84px;height:24px;border:1px solid #2F5F92;border-radius:3px;box-sizing:border-box;background:linear-gradient(#FDFDFE,#F1F3F6 50%,#E6EAEF);"></div>
<svg class="b" style="left:14px;top:688px" width="30" height="28" viewBox="0 0 30 28"><path d="M5 4 C6.5 3.5 8.3 3.7 9.8 4.8 C14 9 19 15.5 22.5 20.5 C23.3 21.8 23.8 23 23.8 24 C23 23.6 22.5 23 21.8 22.2 C17.5 17 13.5 12.5 9.5 9 C8 8.1 6.5 7.8 5.3 7 Z" fill="#8E8E8E" stroke="#8E8E8E" stroke-width="0.6"/><path d="M25.2 4.6 C23 7.5 19 11.5 13.2 18 C11.8 19.5 10.5 21.5 10 23.8 C8.9 23.2 7.6 22.4 6.8 21.6 C7.8 20.3 9 19.2 10.3 18 C15 13 20 8 25.2 4.6 Z" fill="#8E8E8E" stroke="#8E8E8E" stroke-width="0.6"/></svg>
<div class="t" style="left:49.60px;top:695.17px;font-size:12.5px;line-height:14px;color:#A0A0A0;transform:scaleX(0.8856);transform-origin:0 0;">Delete</div>
<div class="t" style="left:104.30px;top:688.17px;font-size:12.5px;line-height:14px;color:#000;transform:scaleX(0.8363);transform-origin:0 0;">Deletes entire payment</div>
<div class="t" style="left:104.30px;top:701.17px;font-size:12.5px;line-height:14px;color:#000;transform:scaleX(0.8286);transform-origin:0 0;">and all splits</div>
<div class="t" style="left:413.50px;top:661.17px;font-size:12.5px;line-height:14px;color:#000;transform:scaleX(0.8711);transform-origin:0 0;">Total</div>
<div class="b" style="left:443px;top:658px;width:50px;height:19px;background:#F0F0F0;border-left:1px solid #E3E3E3;border-right:1px solid #E3E3E3;border-top:1px solid #E8E8E8;border-bottom:1px solid #7A7A7A;box-sizing:border-box;box-shadow:inset 0 0 0 1px #FFFFFF;"></div>
<div class="t" style="left:468.00px;top:660.17px;font-size:12.5px;line-height:14px;color:#000;transform:scaleX(0.8837);transform-origin:0 0;">0.00</div>
<div class="b" style="left:505px;top:656px;width:79px;height:23px;border:1px solid #2F5F92;border-radius:3px;box-sizing:border-box;background:linear-gradient(#FDFDFE,#F1F3F6 50%,#E6EAEF);"></div>
<svg class="b" style="left:514px;top:658px" width="17" height="19" viewBox="0 0 17 19"><path d="M2.8 9.5 L9.6 2.7 L9.6 5.3 L14 5.3 L14 14.1 L9.6 14.1 L9.6 16.3Z" fill="#0000FF" stroke="#000" stroke-width="1" stroke-linejoin="miter"/><path d="M4 9.3 L9 4.2" stroke="#7A7AFF" stroke-width="0.9"/></svg>
<div class="t" style="left:534.80px;top:661.17px;font-size:12.5px;line-height:14px;color:#000;transform:scaleX(0.8898);transform-origin:0 0;">Transfer</div>
<div class="t" style="left:746.50px;top:661.17px;font-size:12.5px;line-height:14px;color:#000;transform:scaleX(0.8428);transform-origin:0 0;">Group By</div>
<div class="b" style="left:796px;top:657px;width:111px;height:21px;background:#fff;border:1px solid #A9A9A9;box-sizing:border-box;"><svg width="9" height="6" viewBox="0 0 9 6" style="position:absolute;left:97px;top:7px;"><path d="M0.6 1.1 L4.2 4.3 L7.8 1.1" fill="none" stroke="#333" stroke-width="1.2"/></svg></div>
<div class="t" style="left:800.00px;top:662.17px;font-size:12.5px;line-height:14px;color:#000;transform:scaleX(0.9082);transform-origin:0 0;">Clinic and Provide</div>
<div class="t" style="left:1023.70px;top:661.17px;font-size:12.5px;line-height:14px;color:#000;transform:scaleX(0.8711);transform-origin:0 0;">Total</div>
<div class="b" style="left:1053px;top:658px;width:49px;height:19px;background:#F0F0F0;border-left:1px solid #E3E3E3;border-right:1px solid #E3E3E3;border-top:1px solid #E8E8E8;border-bottom:1px solid #7A7A7A;box-sizing:border-box;box-shadow:inset 0 0 0 1px #FFFFFF;"></div>
<div class="t" style="left:1067.00px;top:660.17px;font-size:12.5px;line-height:14px;color:#000;transform:scaleX(0.8500);transform-origin:0 0;">534.80</div>
<div class="b" style="left:1032px;top:690px;width:75px;height:24px;border:1px solid #2F5F92;border-radius:3px;box-sizing:border-box;background:linear-gradient(#FDFDFE,#F1F3F6 50%,#E6EAEF);"></div>
<div class="t" style="left:1056.90px;top:695.17px;font-size:12.5px;line-height:14px;color:#000;transform:scaleX(0.8950);transform-origin:0 0;">Save</div>
</body></html>
